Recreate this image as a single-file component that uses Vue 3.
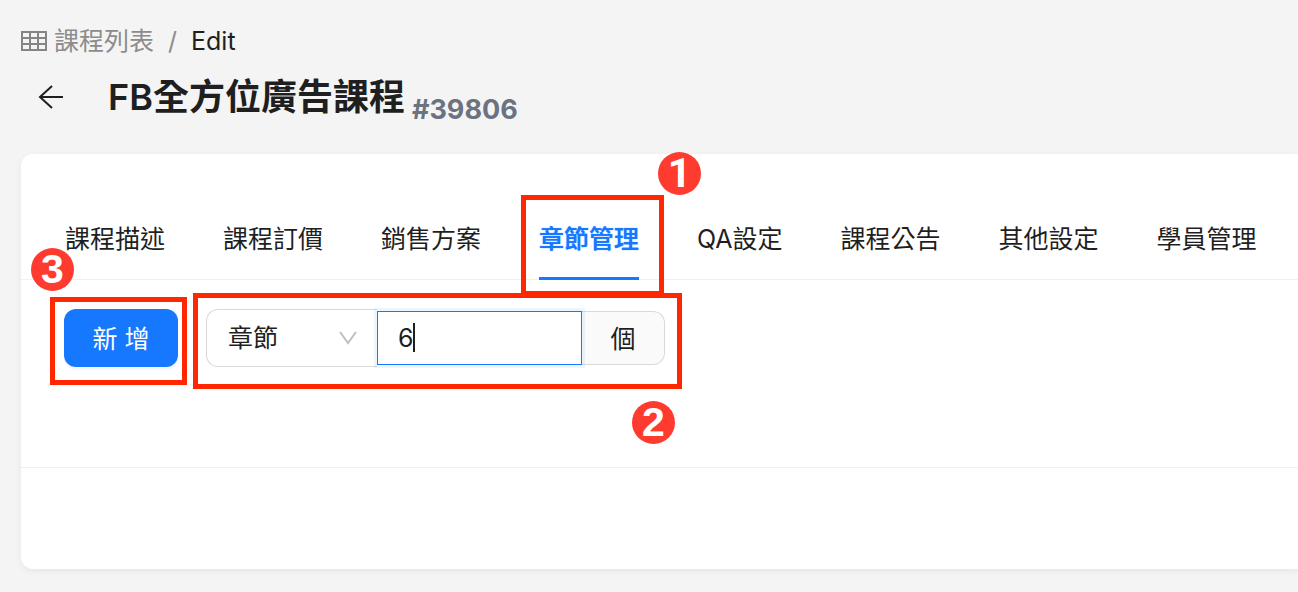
<script setup>
import { ref } from 'vue'

const tabs = ['課程描述', '課程訂價', '銷售方案', '章節管理', 'QA設定', '課程公告', '其他設定', '學員管理']
const active = ref(3)
const kind = ref('章節')
const amount = ref('6')
</script>

<template>
  <div class="page">
    <nav class="breadcrumb" aria-label="breadcrumb">
      <a href="#" class="crumb">
        <svg class="table-icon" viewBox="0 0 26 20" aria-hidden="true">
          <path d="M1 1H25V19H1ZM1 7H25M1 13H25M9 1V19M17 1V19" />
        </svg>
        <span>課程列表</span>
      </a>
      <span class="slash">/</span>
      <span>Edit</span>
    </nav>

    <header class="heading">
      <button class="back" type="button" aria-label="Back">
        <svg viewBox="0 0 26 26" aria-hidden="true">
          <path d="M25 12H2M14 1L2 12L14 23" />
        </svg>
      </button>
      <h1>FB全方位廣告課程<sub>#39806</sub></h1>
    </header>

    <main class="card">
      <section class="content">
        <div class="tabs" role="tablist">
          <button
            v-for="(tab, i) in tabs"
            :key="tab"
            type="button"
            role="tab"
            class="tab"
            :class="{ active: i === active }"
            :aria-selected="i === active"
            @click="active = i"
          >
            {{ tab }}
            <span v-if="i === 3" class="frame frame-tab"><b class="badge badge-one">1</b></span>
          </button>
        </div>
        <form class="tools" @submit.prevent>
          <div class="add-wrap">
            <button class="add" type="submit">新 增</button>
            <span class="frame frame-add"><b class="badge badge-three">3</b></span>
          </div>
          <div class="group">
            <div class="select-wrap">
              <select v-model="kind" aria-label="類型">
                <option>章節</option>
              </select>
              <svg class="chevron" viewBox="0 0 18 14" aria-hidden="true"><path d="M1 1L9 12L17 1" /></svg>
            </div>
            <div class="input-wrap">
              <input id="amount" v-model="amount" type="text" />
              <span class="caret"></span>
            </div>
            <label class="addon" for="amount">個</label>
            <span class="frame frame-group"><b class="badge badge-two">2</b></span>
          </div>
        </form>
      </section>
      <footer class="card-footer"></footer>
    </main>
  </div>
</template>

<style>
body {
  margin: 0;
  background: #f4f4f4;
}
</style>

<style scoped>
.page,
button,
input,
select {
  font-family: Inter, "Noto Sans CJK TC", sans-serif;
  font-size: 25px;
  color: #1f1f1f;
}
* {
  box-sizing: border-box;
}
.page {
  padding: 22px 0 22px 21px;
  overflow: hidden;
}
svg {
  display: block;
  fill: none;
}
button {
  border: 0;
  padding: 0;
  background: none;
  cursor: pointer;
}
.breadcrumb {
  display: flex;
  align-items: center;
  height: 38px;
}
.crumb {
  display: flex;
  align-items: center;
  gap: 7px;
  line-height: 36px;
  color: #8c8c8c;
  text-decoration: none;
}
.table-icon {
  width: 26px;
  height: 20px;
  stroke: #858585;
  stroke-width: 2;
}
.slash {
  width: 37px;
  text-align: center;
  color: #8c8c8c;
}
.heading {
  display: flex;
  align-items: center;
  gap: 44px;
  height: 76px;
  padding: 0 17px;
}
.back svg {
  width: 26px;
  height: 26px;
  stroke: #1f1f1f;
  stroke-width: 2;
}
h1 {
  margin: 0;
  font-size: 36px;
  line-height: 48px;
  font-weight: 600;
  white-space: nowrap;
}
sub {
  margin-left: 7px;
  font-size: 27px;
  line-height: 1;
  font-weight: 700;
  color: #6b7280;
}
.card {
  margin-top: 18px;
  background: #fff;
  border-radius: 12px 0 0 12px;
  box-shadow: 0 2px 6px rgba(0, 0, 0, 0.06);
}
.content {
  padding: 44px 0 100px;
  border-bottom: 1px solid #f0f0f0;
}
.tabs {
  display: flex;
  gap: 58px;
  padding: 0 44px;
  box-shadow: inset 0 -1px #f0f0f0;
}
.tab {
  position: relative;
  flex: none;
  height: 82px;
  padding-bottom: 4px;
  white-space: nowrap;
}
.tab.active {
  color: #1677ff;
  font-weight: 500;
  text-shadow: 0 0 1px #1677ff;
  box-shadow: inset 0 -3px #1677ff;
}
.tools {
  display: flex;
  align-items: center;
  gap: 28px;
  padding: 29px 43px 0;
}
.add-wrap,
.group {
  position: relative;
}
.add {
  display: block;
  width: 114px;
  height: 58px;
  padding-bottom: 2px;
  border-radius: 12px;
  background: #1677ff;
  color: #fff;
  box-shadow: 0 3px 0 rgba(5, 145, 255, 0.06);
}
.group {
  display: flex;
  align-items: center;
}
.select-wrap,
.input-wrap {
  position: relative;
}
select {
  display: block;
  appearance: none;
  width: 171px;
  height: 58px;
  padding: 0 21px;
  border: 1px solid #d9d9d9;
  border-right: 0;
  border-radius: 12px 0 0 12px;
  background: #fff;
}
.chevron {
  position: absolute;
  right: 20px;
  top: 22px;
  width: 18px;
  height: 14px;
  stroke: #bfbfbf;
  stroke-width: 2;
  pointer-events: none;
}
.input-wrap {
  z-index: 1;
}
input {
  display: block;
  width: 205px;
  height: 54px;
  padding: 0 20px;
  border: 1px solid #1677ff;
  border-radius: 0;
  background: #fff;
  box-shadow: 0 0 0 3px rgba(5, 145, 255, 0.08);
  outline: 0;
}
.caret {
  position: absolute;
  left: 36px;
  top: 12px;
  width: 2px;
  height: 29px;
  background: #1f1f1f;
}
.addon {
  display: flex;
  align-items: center;
  justify-content: center;
  width: 83px;
  height: 54px;
  padding-bottom: 2px;
  border: 1px solid #d9d9d9;
  border-left: 0;
  border-radius: 0 12px 12px 0;
  background: #fafafa;
}
.frame {
  position: absolute;
  z-index: 2;
  border: 5px solid #ff2600;
  text-shadow: none;
  pointer-events: none;
}
.frame-tab {
  inset: -3px -25px -16px -18px;
}
.frame-add {
  inset: -12px -9px -18px -14px;
}
.frame-group {
  inset: -16px -17px -22px -13px;
}
.badge {
  position: absolute;
  width: 43px;
  height: 43px;
  border-radius: 50%;
  background: #ff3b30;
  color: #fff;
  font: 700 41px/43px "Liberation Sans", Arial, sans-serif;
  text-align: center;
}
.badge-one {
  top: -48px;
  right: -42px;
  font-family: Roboto, sans-serif;
}
.badge-two {
  right: 2px;
  bottom: -60px;
}
.badge-three {
  top: -54px;
  left: -24px;
}
.card-footer {
  height: 101px;
}
</style>
